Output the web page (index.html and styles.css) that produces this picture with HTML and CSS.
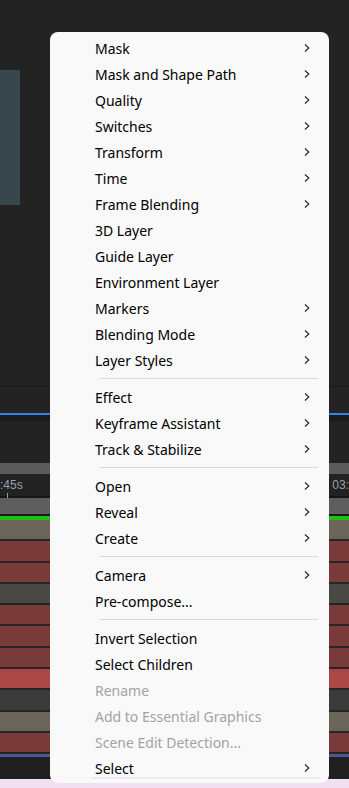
FILE: index.html
```html
<!DOCTYPE html>
<html>
<head>
<meta charset="utf-8">
<link rel="stylesheet" href="styles.css">
</head>
<body>
<div class="app">
  <div class="viewer"><div class="preview"></div></div>
  <div class="panel-edge"></div>
  <div class="panel"></div>
  <div class="blue-line"></div>
  <div class="dark-band"></div>
  <div class="panel tall"></div>
  <div class="scrollbar"></div>
  <div class="ruler"><span class="t-left">:45s</span><span class="t-right">03:</span><div class="tick"></div></div>
  <div class="work-area"></div>
  <div class="green"></div>
  <div class="layers">
    <div class="layer tan"></div>
    <div class="layer red"></div>
    <div class="layer red"></div>
    <div class="layer olive"></div>
    <div class="layer red"></div>
    <div class="layer red"></div>
    <div class="layer red"></div>
    <div class="layer bright"></div>
    <div class="layer gray"></div>
    <div class="layer tan"></div>
    <div class="layer red"></div>
  </div>
  <div class="end-line"></div>
  <div class="footer"></div>
  <div class="desktop"></div>
</div>

<div class="menu">
  <div class="item sub">Mask</div>
  <div class="item sub">Mask and Shape Path</div>
  <div class="item sub">Quality</div>
  <div class="item sub">Switches</div>
  <div class="item sub">Transform</div>
  <div class="item sub">Time</div>
  <div class="item sub">Frame Blending</div>
  <div class="item">3D Layer</div>
  <div class="item">Guide Layer</div>
  <div class="item">Environment Layer</div>
  <div class="item sub">Markers</div>
  <div class="item sub">Blending Mode</div>
  <div class="item sub">Layer Styles</div>
  <div class="sep"></div>
  <div class="item sub">Effect</div>
  <div class="item sub">Keyframe Assistant</div>
  <div class="item sub">Track &amp; Stabilize</div>
  <div class="sep"></div>
  <div class="item sub">Open</div>
  <div class="item sub">Reveal</div>
  <div class="item sub">Create</div>
  <div class="sep"></div>
  <div class="item sub">Camera</div>
  <div class="item">Pre-compose...</div>
  <div class="sep"></div>
  <div class="item">Invert Selection</div>
  <div class="item">Select Children</div>
  <div class="item disabled">Rename</div>
  <div class="item disabled">Add to Essential Graphics</div>
  <div class="item disabled">Scene Edit Detection...</div>
  <div class="item sub">Select</div>
  <div class="scroll-hint"></div>
</div>
</body>
</html>
```

FILE: styles.css
```css
* { box-sizing: border-box; }
html, body { margin: 0; padding: 0; }
body {
  width: 349px;
  height: 788px;
  overflow: hidden;
  background: #232323;
  font-family: "Noto Sans", "Open Sans", sans-serif;
  position: relative;
}
.app { display: flex; flex-direction: column; }
.viewer { height: 386px; background: #232323; padding-top: 70px; }
.preview { width: 20px; height: 135px; background: #37474b; }
.panel-edge { height: 1px; background: #191919; }
.panel { height: 26px; background: #232323; }
.panel.tall { height: 42px; }
.blue-line { height: 2px; background: #2f86e0; }
.dark-band { height: 6px; background: #1b1b1b; }
.scrollbar { height: 11px; background: #5b5b5b; }
.ruler {
  height: 24px;
  background: #222222;
  position: relative;
  display: flex;
  justify-content: space-between;
  align-items: flex-start;
  padding: 4px 0 0 0;
  font-family: "Liberation Sans", sans-serif;
  font-size: 12px;
  color: #97a0ac;
  border-bottom: 2px solid #151515;
}
.t-left { margin-left: 0; }
.t-right { margin-right: 0; }
.tick { position: absolute; left: 7px; top: 19px; width: 1px; height: 5px; background: #9a9a9a; }
.work-area { height: 18px; background: #5e5e5e; border-bottom: 2px solid #1a1a1a; }
.green { height: 4px; background: #1dbf1d; }
.layers { display: flex; flex-direction: column; }
.layer { height: 21.3px; border-bottom: 2px solid #252525; }
.tan { background: #6b6559; }
.red { background: #793a3a; }
.olive { background: #4a4843; }
.bright { background: #ac4747; }
.gray { background: #3b3b3b; }
.end-line { height: 3px; background: #4d5795; }
.footer { height: 22px; background: #202020; }
.desktop { height: 10px; background: #f3dff2; }

.menu {
  position: absolute;
  left: 50px;
  top: 32px;
  width: 279px;
  height: 751px;
  background: #f9f9f9;
  border-radius: 8px;
  padding-top: 3px;
  display: flex;
  flex-direction: column;
}
.item {
  height: 26px;
  flex: none;
  padding-left: 45px;
  padding-right: 19px;
  display: flex;
  align-items: center;
  justify-content: space-between;
  font-size: 14px;
  color: #000000;
  white-space: nowrap;
}
.item.sub::after {
  content: "";
  width: 6px;
  height: 8px;
  background: no-repeat center/6px 8px url("data:image/svg+xml,%3Csvg xmlns='http://www.w3.org/2000/svg' width='6' height='8' viewBox='0 0 6 8'%3E%3Cpath d='M1 0.5 L4.8 4 L1 7.5' fill='none' stroke='%23222' stroke-width='1.1'/%3E%3C/svg%3E");
}
.item.disabled { color: #a3a3a3; }
.sep {
  height: 11px;
  flex: none;
  padding: 5px 11px 0 49px;
}
.sep::before { content: ""; display: block; height: 1px; background: #d9d9d9; }
.scroll-hint {
  height: 2px;
  margin: -4px 9px 0 41px;
  background: #ebebeb;
}
```
